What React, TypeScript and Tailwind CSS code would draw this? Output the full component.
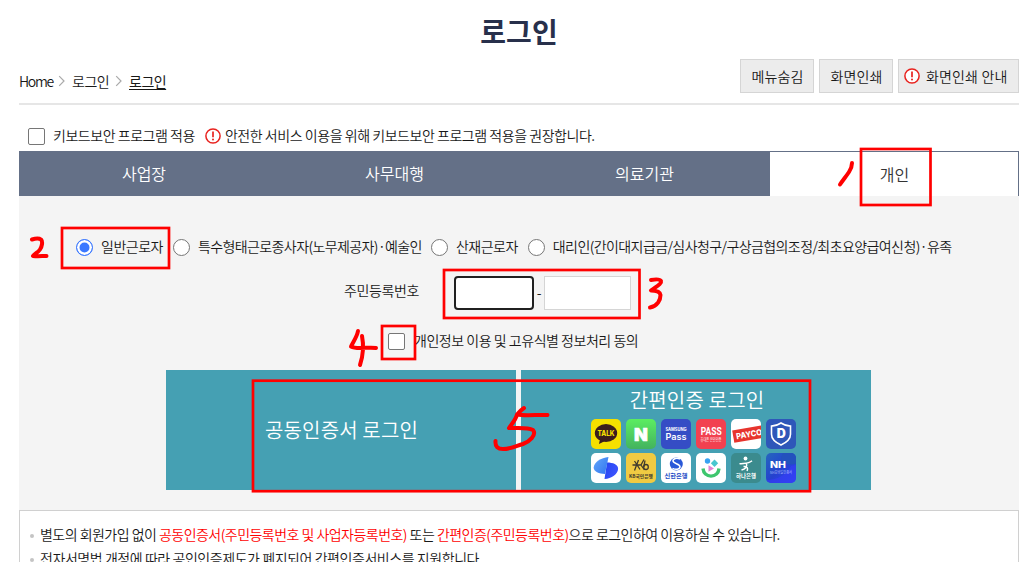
import { useState } from 'react';
import type { ReactNode } from 'react';

const TABS = ['사업장', '사무대행', '의료기관', '개인'];

const WORKER_TYPES = [
  { value: 'general', label: '일반근로자', style: 'mr-[10px]' },
  { value: 'special', label: '특수형태근로종사자(노무제공자)·예술인', style: 'mr-[9px] tracking-[-0.6px]' },
  { value: 'accident', label: '산재근로자', style: 'mr-[10px]' },
  { value: 'agent', label: '대리인(간이대지급금/심사청구/구상금협의조정/최초요양급여신청)·유족', style: 'tracking-[-0.59px]' },
];

function WarningIcon() {
  return (
    <svg width="16" height="16" viewBox="0 0 16 16" className="shrink-0">
      <circle cx="8" cy="8" r="7.1" fill="white" stroke="#e8221e" strokeWidth="1.5" />
      <path d="M8 3.6v5.6" stroke="#e8221e" strokeWidth="1.7" />
      <circle cx="8" cy="11.4" r="1" fill="#e8221e" />
    </svg>
  );
}

function Chevron() {
  return (
    <svg width="8" height="12" viewBox="0 0 8 12" className="mx-1.5 shrink-0">
      <path d="M1.2 1.2 6 6 1.2 10.8" fill="none" stroke="#aaa" strokeWidth="1.2" />
    </svg>
  );
}

function Tile({ color, children }: { color: string; children: ReactNode }) {
  return (
    <svg width="30" height="30" viewBox="0 0 30 30" className={`rounded-[5px] ${color}`}>
      {children}
    </svg>
  );
}

function AuthProviders() {
  return (
    <div className="mr-[5px] grid grid-cols-6 gap-x-[5px] gap-y-1 tracking-normal">
      <Tile color="bg-[#f5e000]">
        <ellipse cx="15" cy="14" rx="11.2" ry="9" fill="#3b1e1e" />
        <path d="m9 20-1 5 6-3z" fill="#3b1e1e" />
        <text x="15" y="16.8" textAnchor="middle" textLength="17" lengthAdjust="spacingAndGlyphs" fontSize="7.5" fontWeight="800" fill="#f5e000" fontFamily="Inter, sans-serif">TALK</text>
      </Tile>
      <Tile color="bg-linear-to-b from-[#5ced60] to-[#43b35e]">
        <text x="15" y="21.7" textAnchor="middle" fontSize="18" fontWeight="900" fill="white" stroke="white" strokeWidth="0.6" fontFamily="Inter, sans-serif">N</text>
      </Tile>
      <Tile color="bg-[#354dc5]">
        <text x="15" y="12" textAnchor="middle" textLength="21" lengthAdjust="spacingAndGlyphs" fontSize="4.4" fontWeight="700" fill="white" fontFamily="Inter, sans-serif">SAMSUNG</text>
        <text x="15" y="20.8" textAnchor="middle" textLength="21" lengthAdjust="spacingAndGlyphs" fontSize="9" fontWeight="600" fill="white" fontFamily="Inter, sans-serif">Pass</text>
      </Tile>
      <Tile color="bg-[#f24150]">
        <text x="15.2" y="16.3" textAnchor="middle" textLength="21" lengthAdjust="spacingAndGlyphs" fontSize="10.5" fontWeight="700" fill="white" fontFamily="Roboto, sans-serif">PASS</text>
        <text x="15" y="22.3" textAnchor="middle" textLength="21" lengthAdjust="spacingAndGlyphs" fontSize="4.5" fill="white" fontFamily="'Noto Sans CJK KR', sans-serif">휴대폰 본인인증</text>
      </Tile>
      <Tile color="bg-white">
        <g transform="rotate(-10 16 15)">
          <rect x="2" y="9" width="33" height="12.5" fill="#e7342d" />
          <text x="5" y="18.5" textLength="26" lengthAdjust="spacingAndGlyphs" fontSize="8.2" fontWeight="800" fill="white" fontFamily="Inter, sans-serif">PAYCO</text>
        </g>
      </Tile>
      <Tile color="bg-[#2e57b9]">
        <path d="M15 4c3 2.1 6 3 9.5 3.1v8.2c0 4.5-3.5 8-9.5 10.7-6-2.7-9.5-6.2-9.5-10.7V7.1C9 7 12 6.1 15 4z" fill="none" stroke="white" strokeWidth="1.6" />
        <text x="15.2" y="19.2" textAnchor="middle" fontSize="12.5" fontWeight="900" fill="white" fontFamily="Inter, sans-serif">D</text>
      </Tile>

      <Tile color="bg-white">
        <defs>
          <linearGradient id="tossLeft" x1="0" y1="0" x2="1" y2="0.8">
            <stop offset="0" stopColor="#62a6fb" />
            <stop offset="1" stopColor="#3579f0" />
          </linearGradient>
          <linearGradient id="tossRight" x1="0" y1="0" x2="1" y2="0.5">
            <stop offset="0" stopColor="#2344ef" />
            <stop offset="1" stopColor="#3d54ff" />
          </linearGradient>
        </defs>
        <path d="M16 9.5c6 0 11.2 2 11.1 6.2C27 21 20.5 25.5 13.5 26z" fill="url(#tossRight)" />
        <path d="M17.5 4 14 21C8 21 2.6 18.5 2.7 14.6 3 9 10 5 17.5 4z" fill="url(#tossLeft)" />
      </Tile>
      <Tile color="bg-[#f0ca42]">
        <path d="M6.5 12h8M8.5 8l5.5 8.5M12.5 7 8.5 17.5M18 6.5l-3 5.5 3.5 5" fill="none" stroke="#3f392e" strokeWidth="1.3" />
        <ellipse cx="20" cy="14" rx="2.3" ry="2.5" fill="none" stroke="#3f392e" strokeWidth="1.3" />
        <path d="M19 7.5 17.8 14" stroke="#3f392e" strokeWidth="1.3" />
        <text x="15" y="24.5" textAnchor="middle" textLength="24" lengthAdjust="spacingAndGlyphs" fontSize="4.8" fontWeight="700" fill="#3f392e" fontFamily="'Noto Sans CJK KR', sans-serif">KB국민은행</text>
      </Tile>
      <Tile color="bg-white">
        <circle cx="15.3" cy="11" r="6.5" fill="#2958d8" />
        <path d="M19 6c-3-1.5-7-.7-7 1.8 0 3.2 7 2.7 7 6 0 2.7-4.5 3.2-7.5 1.5" fill="none" stroke="white" strokeWidth="1.5" />
        <text x="15" y="25.3" textAnchor="middle" textLength="23" lengthAdjust="spacingAndGlyphs" fontSize="6.2" fontWeight="700" fill="#234cc5" fontFamily="'Noto Sans CJK KR', sans-serif">신한은행</text>
      </Tile>
      <Tile color="bg-white">
        <path d="M7 15.5c.5 4.8 3.7 7.6 8 7.6s7.5-2.8 8-7.6" fill="none" stroke="#3ec66e" strokeWidth="3.4" />
        <circle cx="11.5" cy="8" r="2.7" fill="#38a2f2" />
        <path d="m18.5 6.5 3.7 3.7-3.7 3.7-3.7-3.7z" fill="#48c6cf" />
        <path d="m12.5 12.3 5.5 3.2-5.5 3.3z" fill="#e481d2" />
      </Tile>
      <Tile color="bg-[#3b8b8e]">
        <circle cx="14.5" cy="5.5" r="1.9" fill="white" />
        <path d="M8.5 10.8c4.5-.8 9 .2 12.5-3M15.5 10.5c1 3.5-1.5 5.5-5 6.5M12.5 13.5c3.5-.5 5 1.5 3.5 4.5" fill="none" stroke="white" strokeWidth="1.5" />
        <text x="15" y="25.4" textAnchor="middle" textLength="20" lengthAdjust="spacingAndGlyphs" fontSize="5.8" fontWeight="700" fill="white" fontFamily="'Noto Sans CJK KR', sans-serif">하나은행</text>
      </Tile>
      <Tile color="bg-linear-to-br from-[#2766bd] via-[#2541ce] to-[#3044ff]">
        <path d="M17 0c-5 8 0 13 13 11V0z" fill="#2352bd" />
        <path d="M0 27c10 0 20-4 25-14l5-1v18H0z" fill="#343df2" opacity="0.7" />
        <text x="4" y="14.8" textLength="16" lengthAdjust="spacingAndGlyphs" fontSize="8.5" fontWeight="800" fill="white" fontFamily="Inter, sans-serif">NH</text>
        <text x="4" y="20.8" textLength="22" lengthAdjust="spacingAndGlyphs" fontSize="4" fill="#b9c5ff" fontFamily="'Noto Sans CJK KR', sans-serif">NH모바일인증서</text>
      </Tile>
    </div>
  );
}

// Hand-drawn guide marks over the login steps
function GuideMarks() {
  return (
    <svg
      className="pointer-events-none absolute inset-0"
      width="1022"
      height="562"
      viewBox="0 0 1022 562"
      fill="none"
      stroke="#ff0000"
      strokeWidth="2.7"
    >
      <rect x="861" y="149" width="69.5" height="56" />
      <rect x="62" y="228" width="107" height="40" />
      <rect x="444" y="270" width="195.5" height="48" />
      <rect x="382" y="326" width="33" height="33" />
      <rect x="253" y="380.7" width="557" height="110.5" />
      <g strokeWidth="4" strokeLinecap="round" strokeLinejoin="round">
        <path d="M852 163c0 3-1 6-3 9-3 4.5-6 8-9 12.5" />
        <path d="M32 239.5c3-1 7-1.5 9 0 2 2 1 7-1 10-2 3-5 4-7 6.5 5 .5 9 0 13.5 0" />
        <path d="M651 280c3-.5 9-1 10 1 1 3-6 6-10 9.5 5 0 9 1 9.5 4.5 0 5-3 11-10.5 12.5" />
        <path d="M358 331c-1 6-5 11-7 15.5 6 3.5 17 0 25 1.5M362 336c2 10 1 20-2 29" />
        <path d="M524 408c-3 2-5 4-7 6.5 8 1.5 21 0 30.5.5M517 414.5c-1 5-5 9-8 13.5 8 .5 18-1 24 2 4 5-4 12-10 14-7 2-12 5-20 5-5 0-8-2-7.5-8" />
      </g>
    </svg>
  );
}

export default function App() {
  const [worker, setWorker] = useState('general');

  return (
    <div className="relative h-[562px] w-[1022px] overflow-hidden bg-white pr-[3px] pl-[19px] font-['Noto_Sans_CJK_KR',sans-serif] text-sm font-[350] tracking-[-0.5px] text-[#181818]">
      <h1 className="h-[59px] pt-[11px] text-center text-[28px] leading-[40px] font-bold tracking-normal text-[#28304b]">로그인</h1>

      <div className="flex h-[46px] items-start justify-between border-b-2 border-[#e6e6e6]">
        <nav className="flex h-11 items-center whitespace-nowrap">
          <span className="w-[33px] tracking-[-1.3px]">Home</span>
          <Chevron />
          <span className="w-[37px]">로그인</span>
          <Chevron />
          <span className="font-normal underline underline-offset-2">로그인</span>
        </nav>
        <div className="flex gap-[5px] tracking-[0.15px]">
          <button className="h-[34px] w-[74px] border border-[#d5d5d5] bg-[#ececec] pl-px">메뉴숨김</button>
          <button className="h-[34px] w-[74px] border border-[#d5d5d5] bg-[#ececec] pl-px">화면인쇄</button>
          <button className="flex h-[34px] w-[121px] items-center gap-1.5 border border-[#d5d5d5] bg-[#ececec] pl-[5px] whitespace-nowrap">
            <WarningIcon />
            화면인쇄 안내
          </button>
        </div>
      </div>

      <div className="flex h-[46px] items-center pt-[16px] pl-[9px] tracking-[-0.46px]">
        <input type="checkbox" className="mr-2 size-[17px] appearance-none rounded-[2px] border border-[#767676] bg-white" />
        <label className="pb-0.5">키보드보안 프로그램 적용</label>
        <span className="ml-[10px] flex items-center gap-1">
          <WarningIcon />
          <span className="pb-0.5">안전한 서비스 이용을 위해 키보드보안 프로그램 적용을 권장합니다.</span>
        </span>
      </div>

      <div className="grid h-[45px] grid-cols-[251px_250px_250px_249px] text-base tracking-normal">
        {TABS.map((tab) => (
          <button
            key={tab}
            className={
              tab === '개인'
                ? 'border-t border-r border-[#647087] bg-white pl-px text-[#333]'
                : 'bg-[#647087] pr-px pb-0.5 text-white'
            }
          >
            {tab}
          </button>
        ))}
      </div>

      <div className="flex h-[314px] flex-col bg-[#f4f4f4]">
        <div className="mt-[39px] flex h-6 items-center pl-[57px] whitespace-nowrap">
          {WORKER_TYPES.map((item) => (
            <label key={item.value} className={`flex items-center ${item.style}`}>
              <input
                type="radio"
                name="worker"
                checked={worker === item.value}
                onChange={() => setWorker(item.value)}
                className="mr-2 size-[17px] appearance-none rounded-full border border-[#767676] bg-white checked:border-[#3b78ff] checked:bg-[#3b78ff] checked:shadow-[inset_0_0_0_2.5px_white]"
              />
              <span className="pb-0.5">{item.label}</span>
            </label>
          ))}
        </div>

        <div className="mt-[17px] flex h-[34px] pl-[325px]">
          <label className="w-[110px] pt-1 tracking-[-0.4px]">주민등록번호</label>
          <input type="text" className="w-20 rounded-[4px] border-2 border-[#202020] bg-white outline-none" />
          <span className="w-2.5 pt-1.5 text-center">-</span>
          <input type="password" className="w-[87px] border border-[#d5d5d5] bg-white outline-none" />
        </div>

        <div className="mt-[19px] flex h-6 items-center pl-[369px]">
          <input type="checkbox" className="mr-[9px] size-[17px] appearance-none rounded-[2px] border border-[#767676] bg-white" />
          <label className="pb-0.5 tracking-[-0.47px]">개인정보 이용 및 고유식별 정보처리 동의</label>
        </div>

        <div className="mt-[17px] flex h-[120px] gap-[5px] pl-[147px] text-xl tracking-[0.15px] text-white">
          <button className="w-[350px] bg-[#45a0b3] pl-px">공동인증서 로그인</button>
          <button className="flex w-[350px] flex-col items-center bg-[#45a0b3] pt-[15px]">
            <span className="mb-1 pl-0.5 leading-[30px]">간편인증 로그인</span>
            <AuthProviders />
          </button>
        </div>
      </div>

      <ul className="h-[80px] border border-[#d0d0d0] bg-white pt-[11px] pl-2.5 leading-6">
        <li className="flex items-center tracking-[-0.53px]">
          <i className="mt-1 mr-[6px] size-1 rounded-full bg-[#c4c4c4]" />
          <p>
            별도의 회원가입 없이 <span className="text-[#f00]">공동인증서(주민등록번호 및 사업자등록번호)</span> 또는{' '}
            <span className="text-[#f00]">간편인증(주민등록번호)</span>으로 로그인하여 이용하실 수 있습니다.
          </p>
        </li>
        <li className="flex items-center tracking-[-0.44px]">
          <i className="mt-1 mr-[6px] size-1 rounded-full bg-[#c4c4c4]" />
          <p>전자서명법 개정에 따라 공인인증제도가 폐지되어 간편인증서비스를 지원합니다.</p>
        </li>
      </ul>

      <GuideMarks />
    </div>
  );
}
